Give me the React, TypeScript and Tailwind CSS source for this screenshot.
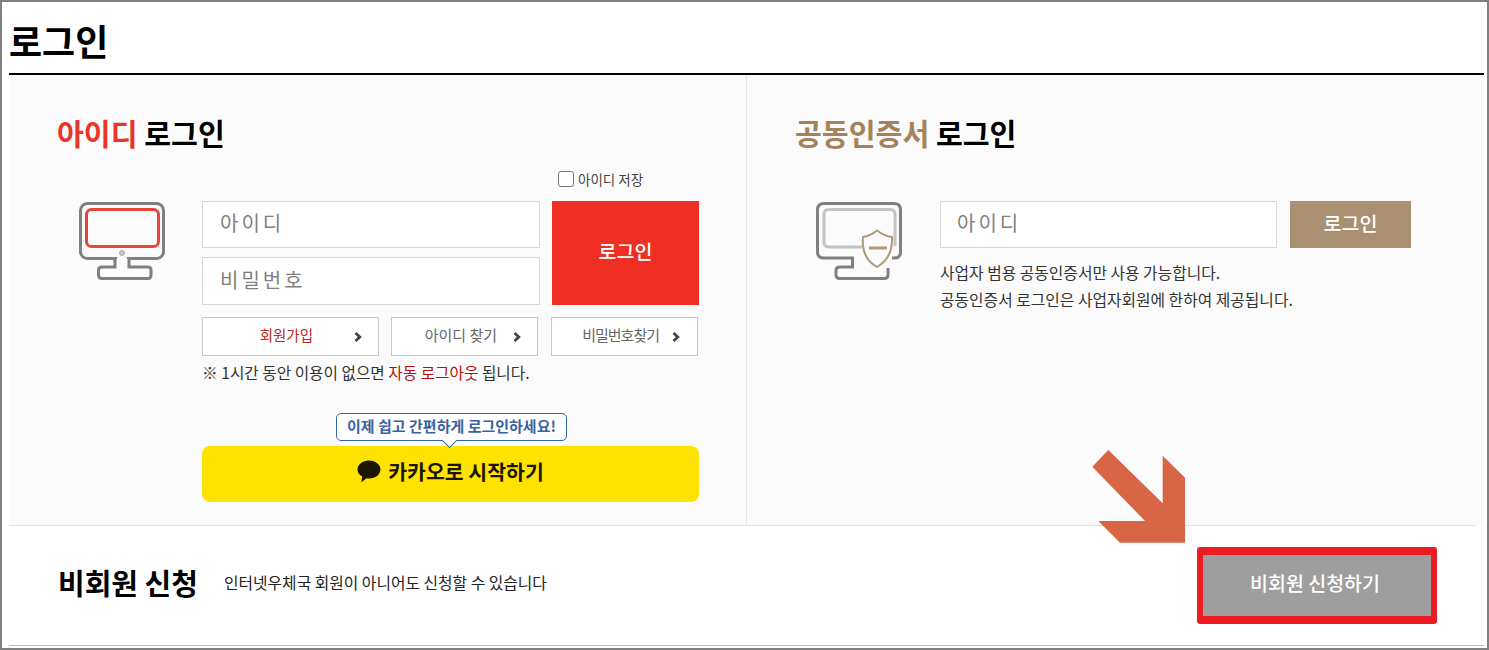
function Chevron() {
  return (
    <svg width="8" height="10" viewBox="0 0 8 10" className="shrink-0">
      <path d="M1.500 1 L5.800 5 L1.500 9" fill="none" stroke="#444" strokeWidth="2.800" />
    </svg>
  );
}

function MonitorIcon() {
  return (
    <svg width="88" height="80" viewBox="78 201 88 80" className="block">
      <rect x="80.500" y="203.500" width="83" height="55" rx="7" fill="none" stroke="#808080" strokeWidth="3" />
      <rect x="86.500" y="209.500" width="72" height="37" rx="5" fill="none" stroke="#e8453a" strokeWidth="3" />
      <circle cx="122" cy="253" r="2.500" fill="#c9c9c9" stroke="#aaa" />
      <path d="M115 259 V267 H102 Q98.500 267 98.500 270 V275 Q98.500 278.500 102 278.500 H148 Q151 278.500 151 275 V270 Q151 267 148 267 H129 V259" fill="#fbfbfb" stroke="#808080" strokeWidth="3" />
      <rect x="117" y="256" width="10" height="3" fill="#fbfbfb" />
    </svg>
  );
}

function CertIcon() {
  return (
    <svg width="88" height="80" viewBox="815 201 88 80" className="block">
      <path d="M892 258 H894 Q900.500 258 900.500 252 V210 Q900.500 203.500 894 203.500 H824 Q817.500 203.500 817.500 210 V252 Q817.500 258 824 258 H852.500 V267 H840 Q836 267 836 270 V275 Q836 278.500 840 278.500 H884 Q888 278.500 888 275 V268" fill="none" stroke="#808080" strokeWidth="3" />
      <path d="M862 247 H829 Q824 247 824 242 V214 Q824 209.500 829 209.500 H890 Q895 209.500 895 214 V246" fill="none" stroke="#c4c4c4" strokeWidth="3" />
      <path d="M877 230.500 Q884 236 892 237 Q893 258 877 267 Q861 258 863 237 Q870 236 877 230.500 Z" fill="#fbfbfb" stroke="#b09a7a" strokeWidth="2" />
      <path d="M869 248 H887" stroke="#b09a7a" strokeWidth="3" />
    </svg>
  );
}

function KakaoIcon() {
  return (
    <svg width="24" height="23" viewBox="0 0 24 23" className="shrink-0">
      <path d="M12 0.500 C18.500 0.500 23.500 4.500 23.500 9.500 C23.500 14.500 18.500 18.500 12 18.500 C11 18.500 10.200 18.400 9.400 18.300 L4.200 22.500 L5.300 16.500 C2.300 15 0.500 12.500 0.500 9.500 C0.500 4.500 5.500 0.500 12 0.500 Z" fill="#1c1600" />
    </svg>
  );
}

function Arrow() {
  return (
    <svg width="94" height="94" viewBox="1092 450 94 94" className="absolute left-[1090px] top-[448px]">
      <path d="M1108.300 450 L1162.700 503.300 V455.700 L1185 477.700 V542.700 H1120 L1098.300 521 H1145 L1092.300 466.700 Z" fill="#d76546" />
    </svg>
  );
}

export default function App() {
  return (
    <div className="relative w-[1489px] h-[650px] overflow-hidden border-2 border-[#808080] bg-white pl-[7px] pr-[3px] font-['Noto_Sans_CJK_KR',sans-serif] text-black">
      <h1 className="h-[73px] border-b-2 border-black text-[36px] leading-[76px] font-bold">로그인</h1>

      <div className="flex h-[450px] bg-[#fbfbfb]">
        <section className="w-[738px] border-r border-[#e4e4e4] pl-[48px] pt-[34px]">
          <h2 className="h-[48px] text-[29.200px] leading-[46px] font-bold">
            <span className="text-[#e8352b]">아이디</span> 로그인
          </h2>
          <div className="flex">
            <div className="w-[145px] pl-[21px] pt-[44px]">
              <MonitorIcon />
            </div>
            <div className="w-[497px]">
              <label className="mt-[14px] ml-[356px] flex h-[16px] items-center gap-[4px] text-[13.500px] text-[#444]">
                <input type="checkbox" className="h-[16px] w-[16px] appearance-none rounded-[3px] border border-[#767676] bg-white" />
                아이디 저장
              </label>
              <div className="mt-[14px] flex gap-[12px]">
                <div className="flex w-[338px] flex-col gap-[9px]">
                  <input placeholder="아이디" className="h-[47px] border border-[#d8d8d8] bg-white px-[17px] pb-[4px] text-[20px] tracking-[3px] placeholder:text-[#808080]" />
                  <input placeholder="비밀번호" className="h-[48px] border border-[#d8d8d8] bg-white px-[17px] pb-[4px] text-[20px] tracking-[3px] placeholder:text-[#808080]" />
                </div>
                <button className="h-[104px] w-[147px] bg-[#ef2e24] pb-[4px] text-[19.500px] font-medium text-white">로그인</button>
              </div>
              <div className="mt-[12px] flex text-[15px]">
                <a className="flex h-[39px] w-[177px] items-center justify-end gap-[41px] border border-[#c8c8c8] bg-white pr-[16px] text-[#bb2a22]">
                  <span className="pb-[3px] text-[14.500px]">회원가입</span>
                  <Chevron />
                </a>
                <a className="ml-[12px] flex h-[39px] w-[147px] items-center justify-end gap-[16px] border border-[#c8c8c8] bg-white pr-[16px] text-[#666]">
                  <span className="pb-[3px]">아이디 찾기</span>
                  <Chevron />
                </a>
                <a className="ml-[13px] flex h-[39px] w-[147px] items-center justify-end gap-[13px] border border-[#c8c8c8] bg-white pr-[17px] text-[#666]">
                  <span className="pb-[3px] tracking-[-1px]">비밀번호찾기</span>
                  <Chevron />
                </a>
              </div>
              <p className="mt-[7px] h-[20px] text-[15.700px] leading-[20px] text-[#333]">
                ※ 1시간 동안 이용이 없으면 <span className="text-[#b3100c]">자동 로그아웃</span> 됩니다.
              </p>
              <div className="relative z-10 mt-[30px] ml-[134px] flex h-[28px] w-[231px] items-center justify-center rounded-[5px] border border-[#2f67a8] bg-white pb-[2px] text-[15px] font-bold text-[#3a62a0]">
                이제 쉽고 간편하게 로그인하세요!
                <span className="absolute left-[107px] top-[21px] h-[11px] w-[11px] rotate-45 border-r border-b border-[#2f67a8] bg-white" />
              </div>
              <button className="mt-[5px] flex h-[56px] w-[497px] items-center justify-center gap-[7px] rounded-[8px] bg-[#ffe300] pb-[5px] text-[20.500px] font-bold text-[#1c1600]">
                <KakaoIcon />
                카카오로 시작하기
              </button>
            </div>
          </div>
        </section>

        <section className="flex-1 pl-[48px] pt-[34px]">
          <h2 className="h-[48px] text-[29.200px] leading-[46px] font-bold">
            <span className="text-[#a5835a]">공동인증서</span> 로그인
          </h2>
          <div className="flex">
            <div className="w-[145px] pl-[20px] pt-[44px]">
              <CertIcon />
            </div>
            <div className="pt-[44px]">
              <div className="flex gap-[13px]">
                <input placeholder="아이디" className="h-[47px] w-[337px] border border-[#d8d8d8] bg-white px-[16px] pb-[4px] text-[20px] tracking-[3px] placeholder:text-[#808080]" />
                <button className="h-[47px] w-[121px] bg-[#a89070] pb-[4px] text-[19.500px] font-medium text-white">로그인</button>
              </div>
              <p className="mt-[11px] text-[15.800px] leading-[27px] text-[#333]">
                사업자 범용 공동인증서만 사용 가능합니다.
                <br />
                공동인증서 로그인은 사업자회원에 한하여 제공됩니다.
              </p>
            </div>
          </div>
        </section>
      </div>

      <div className="mr-[8px] h-px bg-[#e2e2e2]" />

      <div className="flex h-[120px] items-center border-b border-[#bdbdbd] pl-[49px] pr-[47px]">
        <div className="mb-[6px] flex items-center gap-[26px]">
          <strong className="text-[29px] font-bold">비회원 신청</strong>
          <span className="text-[15.800px] text-[#222]">인터넷우체국 회원이 아니어도 신청할 수 있습니다</span>
        </div>
        <button className="ml-auto h-[77px] w-[240px] rounded-[3px] border-x-[6px] border-y-[8px] border-[#ed1c24] bg-[#9e9e9e] pr-[4px] pb-[5px] text-[19.500px] font-medium text-white">
          비회원 신청하기
        </button>
      </div>

      <Arrow />
    </div>
  );
}
